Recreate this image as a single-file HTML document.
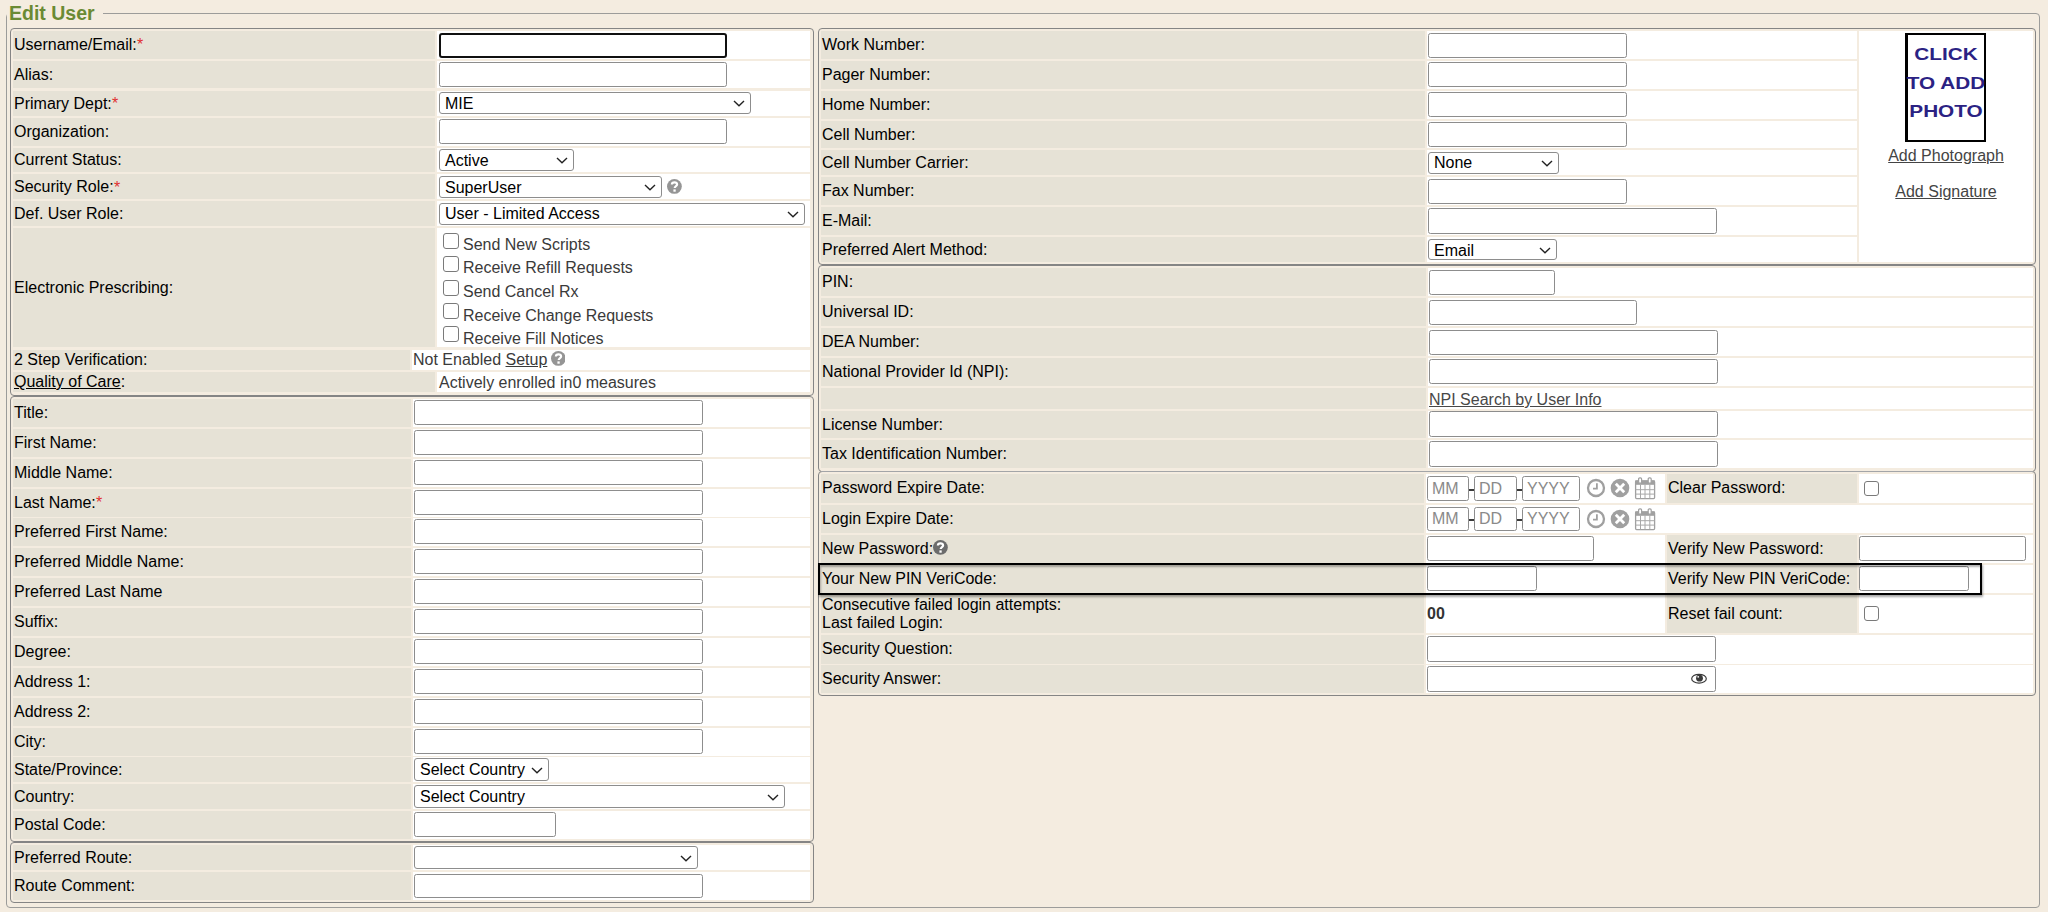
<!DOCTYPE html>
<html><head><meta charset="utf-8"><title>Edit User</title>
<style>
html,body{margin:0;padding:0;}
body{width:2048px;height:912px;overflow:hidden;position:relative;background:#f4ece0;font-family:'Liberation Sans', sans-serif;font-size:16px;color:#000;}
body>div,body>svg{position:absolute;}
</style></head><body>
<div style="left:6px;top:13px;width:2034px;height:895px;box-sizing:border-box;border:1px solid #9c9c9a;border-radius:4px;background:transparent;"></div>
<div style="left:7px;top:8px;width:96px;height:11px;background:#f4ece0;"></div>
<div style="left:9px;top:1px;height:24px;line-height:24px;font-size:19.5px;font-weight:bold;color:#6a8a34;white-space:nowrap">Edit User</div>
<div style="left:10px;top:28px;width:804px;height:368px;box-sizing:border-box;border:1px solid #858585;border-radius:4px;background:transparent;"></div>
<div style="left:13px;top:31px;width:422px;height:28px;background:#e6e2d6;"></div>
<div style="left:437px;top:31px;width:373px;height:28px;background:#ffffff;"></div>
<div style="left:13px;top:61px;width:422px;height:27px;background:#e6e2d6;"></div>
<div style="left:437px;top:61px;width:373px;height:27px;background:#ffffff;"></div>
<div style="left:13px;top:91px;width:422px;height:25px;background:#e6e2d6;"></div>
<div style="left:437px;top:91px;width:373px;height:25px;background:#ffffff;"></div>
<div style="left:13px;top:118px;width:422px;height:28px;background:#e6e2d6;"></div>
<div style="left:437px;top:118px;width:373px;height:28px;background:#ffffff;"></div>
<div style="left:13px;top:148px;width:422px;height:24px;background:#e6e2d6;"></div>
<div style="left:437px;top:148px;width:373px;height:24px;background:#ffffff;"></div>
<div style="left:13px;top:174px;width:422px;height:25px;background:#e6e2d6;"></div>
<div style="left:437px;top:174px;width:373px;height:25px;background:#ffffff;"></div>
<div style="left:13px;top:201px;width:422px;height:25px;background:#e6e2d6;"></div>
<div style="left:437px;top:201px;width:373px;height:25px;background:#ffffff;"></div>
<div style="left:13px;top:228px;width:422px;height:119px;background:#e6e2d6;"></div>
<div style="left:437px;top:228px;width:373px;height:119px;background:#ffffff;"></div>
<div style="left:13px;top:350px;width:397px;height:20px;background:#e6e2d6;"></div>
<div style="left:412px;top:350px;width:398px;height:20px;background:#ffffff;"></div>
<div style="left:13px;top:372px;width:422px;height:20px;background:#e6e2d6;"></div>
<div style="left:437px;top:372px;width:373px;height:20px;background:#ffffff;"></div>
<div style="left:14px;top:31px;height:28px;line-height:28px;font-size:16px;color:#000;font-weight:normal;white-space:nowrap;">Username/Email:</div>
<div style="left:14px;top:61px;height:27px;line-height:27px;font-size:16px;color:#000;font-weight:normal;white-space:nowrap;">Alias:</div>
<div style="left:14px;top:91px;height:25px;line-height:25px;font-size:16px;color:#000;font-weight:normal;white-space:nowrap;">Primary Dept:</div>
<div style="left:14px;top:118px;height:28px;line-height:28px;font-size:16px;color:#000;font-weight:normal;white-space:nowrap;">Organization:</div>
<div style="left:14px;top:148px;height:24px;line-height:24px;font-size:16px;color:#000;font-weight:normal;white-space:nowrap;">Current Status:</div>
<div style="left:14px;top:174px;height:25px;line-height:25px;font-size:16px;color:#000;font-weight:normal;white-space:nowrap;">Security Role:</div>
<div style="left:14px;top:201px;height:25px;line-height:25px;font-size:16px;color:#000;font-weight:normal;white-space:nowrap;">Def. User Role:</div>
<div style="left:14px;top:228px;height:119px;line-height:119px;font-size:16px;color:#000;font-weight:normal;white-space:nowrap;">Electronic Prescribing:</div>
<div style="left:14px;top:350px;height:20px;line-height:20px;font-size:16px;color:#000;font-weight:normal;white-space:nowrap;">2 Step Verification:</div>
<div style="left:14px;top:372px;height:20px;line-height:20px;font-size:16px;color:#000;font-weight:normal;white-space:nowrap;"><span style="text-decoration:underline">Quality of Care</span>:</div>
<div style="left:137px;top:37px;font-size:16px;line-height:16px;color:#e0312f">*</div>
<div style="left:112px;top:96px;font-size:16px;line-height:16px;color:#e0312f">*</div>
<div style="left:114px;top:180px;font-size:16px;line-height:16px;color:#e0312f">*</div>
<div style="left:439px;top:33px;width:288px;height:25px;box-sizing:border-box;border:2px solid #101010;border-radius:3px;background:#fff;"></div>
<div style="left:439px;top:62px;width:288px;height:25px;box-sizing:border-box;border:1px solid #8d8d8d;border-radius:2.5px;background:#fff;"></div>
<div style="left:439px;top:92px;width:312px;height:22px;box-sizing:border-box;border:1px solid #8d8d8d;border-radius:3px;background:#fff;"></div>
<div style="left:445px;top:93px;height:22px;line-height:22px;font-size:16px;color:#000;font-weight:normal;white-space:nowrap;">MIE</div>
<svg style="left:733px;top:99px" width="12" height="8" viewBox="0 0 12 8"><path d="M1 2 L6 6.7 L11 2" fill="none" stroke="#222" stroke-width="1.4"/></svg>
<div style="left:439px;top:119px;width:288px;height:25px;box-sizing:border-box;border:1px solid #8d8d8d;border-radius:2.5px;background:#fff;"></div>
<div style="left:439px;top:149px;width:135px;height:22px;box-sizing:border-box;border:1px solid #8d8d8d;border-radius:3px;background:#fff;"></div>
<div style="left:445px;top:150px;height:22px;line-height:22px;font-size:16px;color:#000;font-weight:normal;white-space:nowrap;">Active</div>
<svg style="left:556px;top:156px" width="12" height="8" viewBox="0 0 12 8"><path d="M1 2 L6 6.7 L11 2" fill="none" stroke="#222" stroke-width="1.4"/></svg>
<div style="left:439px;top:176px;width:223px;height:22px;box-sizing:border-box;border:1px solid #8d8d8d;border-radius:3px;background:#fff;"></div>
<div style="left:445px;top:177px;height:22px;line-height:22px;font-size:16px;color:#000;font-weight:normal;white-space:nowrap;">SuperUser</div>
<svg style="left:644px;top:183px" width="12" height="8" viewBox="0 0 12 8"><path d="M1 2 L6 6.7 L11 2" fill="none" stroke="#222" stroke-width="1.4"/></svg>
<svg style="left:667.3000000000001px;top:179.0px" width="14.8" height="14.8" viewBox="-7.4 -7.4 14.8 14.8"><circle cx="0" cy="0" r="7.4" fill="#959595"/><path d="M-2.5 -1.9 C-2.5 -3.6 -1.3 -4.0 0.2 -4.0 C1.7 -4.0 2.7 -3.2 2.7 -2.0 C2.7 -0.3 0.3 -0.4 0.3 1.7" fill="none" stroke="#fff" stroke-width="2.2"/><rect x="-1.0" y="3.0" width="2.3" height="2.3" fill="#fff"/></svg>
<div style="left:439px;top:203px;width:366px;height:22px;box-sizing:border-box;border:1px solid #8d8d8d;border-radius:3px;background:#fff;"></div>
<div style="left:445px;top:203px;height:22px;line-height:22px;font-size:16px;color:#000;font-weight:normal;white-space:nowrap;">User - Limited Access</div>
<svg style="left:787px;top:210px" width="12" height="8" viewBox="0 0 12 8"><path d="M1 2 L6 6.7 L11 2" fill="none" stroke="#222" stroke-width="1.4"/></svg>
<div style="left:443px;top:233px;width:16px;height:16px;box-sizing:border-box;border:1.3px solid #7a7a7a;border-radius:3px;background:#fff;"></div>
<div style="left:463px;top:231px;height:28px;line-height:28px;font-size:16px;color:#3a3a3a;font-weight:normal;white-space:nowrap;">Send New Scripts</div>
<div style="left:443px;top:256px;width:16px;height:16px;box-sizing:border-box;border:1.3px solid #7a7a7a;border-radius:3px;background:#fff;"></div>
<div style="left:463px;top:254px;height:28px;line-height:28px;font-size:16px;color:#3a3a3a;font-weight:normal;white-space:nowrap;">Receive Refill Requests</div>
<div style="left:443px;top:280px;width:16px;height:16px;box-sizing:border-box;border:1.3px solid #7a7a7a;border-radius:3px;background:#fff;"></div>
<div style="left:463px;top:278px;height:28px;line-height:28px;font-size:16px;color:#3a3a3a;font-weight:normal;white-space:nowrap;">Send Cancel Rx</div>
<div style="left:443px;top:303px;width:16px;height:16px;box-sizing:border-box;border:1.3px solid #7a7a7a;border-radius:3px;background:#fff;"></div>
<div style="left:463px;top:302px;height:28px;line-height:28px;font-size:16px;color:#3a3a3a;font-weight:normal;white-space:nowrap;">Receive Change Requests</div>
<div style="left:443px;top:326px;width:16px;height:16px;box-sizing:border-box;border:1.3px solid #7a7a7a;border-radius:3px;background:#fff;"></div>
<div style="left:463px;top:325px;height:28px;line-height:28px;font-size:16px;color:#3a3a3a;font-weight:normal;white-space:nowrap;">Receive Fill Notices</div>
<div style="left:413px;top:350px;height:20px;line-height:20px;font-size:16px;color:#3a3a3a;font-weight:normal;white-space:nowrap;">Not Enabled <span style="text-decoration:underline">Setup</span></div>
<svg style="left:550.7px;top:351.0px" width="14.8" height="14.8" viewBox="-7.4 -7.4 14.8 14.8"><circle cx="0" cy="0" r="7.4" fill="#959595"/><path d="M-2.5 -1.9 C-2.5 -3.6 -1.3 -4.0 0.2 -4.0 C1.7 -4.0 2.7 -3.2 2.7 -2.0 C2.7 -0.3 0.3 -0.4 0.3 1.7" fill="none" stroke="#fff" stroke-width="2.2"/><rect x="-1.0" y="3.0" width="2.3" height="2.3" fill="#fff"/></svg>
<div style="left:439px;top:373px;height:20px;line-height:20px;font-size:16px;color:#3a3a3a;font-weight:normal;white-space:nowrap;">Actively enrolled in0 measures</div>
<div style="left:10px;top:396px;width:804px;height:446px;box-sizing:border-box;border:1px solid #858585;border-radius:4px;background:transparent;"></div>
<div style="left:13px;top:399px;width:398px;height:28px;background:#e6e2d6;"></div>
<div style="left:413px;top:399px;width:397px;height:28px;background:#ffffff;"></div>
<div style="left:14px;top:399px;height:28px;line-height:28px;font-size:16px;color:#000;font-weight:normal;white-space:nowrap;">Title:</div>
<div style="left:414px;top:400px;width:289px;height:25px;box-sizing:border-box;border:1px solid #8d8d8d;border-radius:2.5px;background:#fff;"></div>
<div style="left:13px;top:429px;width:398px;height:28px;background:#e6e2d6;"></div>
<div style="left:413px;top:429px;width:397px;height:28px;background:#ffffff;"></div>
<div style="left:14px;top:429px;height:28px;line-height:28px;font-size:16px;color:#000;font-weight:normal;white-space:nowrap;">First Name:</div>
<div style="left:414px;top:430px;width:289px;height:25px;box-sizing:border-box;border:1px solid #8d8d8d;border-radius:2.5px;background:#fff;"></div>
<div style="left:13px;top:459px;width:398px;height:28px;background:#e6e2d6;"></div>
<div style="left:413px;top:459px;width:397px;height:28px;background:#ffffff;"></div>
<div style="left:14px;top:459px;height:28px;line-height:28px;font-size:16px;color:#000;font-weight:normal;white-space:nowrap;">Middle Name:</div>
<div style="left:414px;top:460px;width:289px;height:25px;box-sizing:border-box;border:1px solid #8d8d8d;border-radius:2.5px;background:#fff;"></div>
<div style="left:13px;top:489px;width:398px;height:28px;background:#e6e2d6;"></div>
<div style="left:413px;top:489px;width:397px;height:28px;background:#ffffff;"></div>
<div style="left:14px;top:489px;height:28px;line-height:28px;font-size:16px;color:#000;font-weight:normal;white-space:nowrap;">Last Name:</div>
<div style="left:414px;top:490px;width:289px;height:25px;box-sizing:border-box;border:1px solid #8d8d8d;border-radius:2.5px;background:#fff;"></div>
<div style="left:13px;top:518px;width:398px;height:28px;background:#e6e2d6;"></div>
<div style="left:413px;top:518px;width:397px;height:28px;background:#ffffff;"></div>
<div style="left:14px;top:518px;height:28px;line-height:28px;font-size:16px;color:#000;font-weight:normal;white-space:nowrap;">Preferred First Name:</div>
<div style="left:414px;top:519px;width:289px;height:25px;box-sizing:border-box;border:1px solid #8d8d8d;border-radius:2.5px;background:#fff;"></div>
<div style="left:13px;top:548px;width:398px;height:28px;background:#e6e2d6;"></div>
<div style="left:413px;top:548px;width:397px;height:28px;background:#ffffff;"></div>
<div style="left:14px;top:548px;height:28px;line-height:28px;font-size:16px;color:#000;font-weight:normal;white-space:nowrap;">Preferred Middle Name:</div>
<div style="left:414px;top:549px;width:289px;height:25px;box-sizing:border-box;border:1px solid #8d8d8d;border-radius:2.5px;background:#fff;"></div>
<div style="left:13px;top:578px;width:398px;height:28px;background:#e6e2d6;"></div>
<div style="left:413px;top:578px;width:397px;height:28px;background:#ffffff;"></div>
<div style="left:14px;top:578px;height:28px;line-height:28px;font-size:16px;color:#000;font-weight:normal;white-space:nowrap;">Preferred Last Name</div>
<div style="left:414px;top:579px;width:289px;height:25px;box-sizing:border-box;border:1px solid #8d8d8d;border-radius:2.5px;background:#fff;"></div>
<div style="left:13px;top:608px;width:398px;height:28px;background:#e6e2d6;"></div>
<div style="left:413px;top:608px;width:397px;height:28px;background:#ffffff;"></div>
<div style="left:14px;top:608px;height:28px;line-height:28px;font-size:16px;color:#000;font-weight:normal;white-space:nowrap;">Suffix:</div>
<div style="left:414px;top:609px;width:289px;height:25px;box-sizing:border-box;border:1px solid #8d8d8d;border-radius:2.5px;background:#fff;"></div>
<div style="left:13px;top:638px;width:398px;height:28px;background:#e6e2d6;"></div>
<div style="left:413px;top:638px;width:397px;height:28px;background:#ffffff;"></div>
<div style="left:14px;top:638px;height:28px;line-height:28px;font-size:16px;color:#000;font-weight:normal;white-space:nowrap;">Degree:</div>
<div style="left:414px;top:639px;width:289px;height:25px;box-sizing:border-box;border:1px solid #8d8d8d;border-radius:2.5px;background:#fff;"></div>
<div style="left:13px;top:668px;width:398px;height:28px;background:#e6e2d6;"></div>
<div style="left:413px;top:668px;width:397px;height:28px;background:#ffffff;"></div>
<div style="left:14px;top:668px;height:28px;line-height:28px;font-size:16px;color:#000;font-weight:normal;white-space:nowrap;">Address 1:</div>
<div style="left:414px;top:669px;width:289px;height:25px;box-sizing:border-box;border:1px solid #8d8d8d;border-radius:2.5px;background:#fff;"></div>
<div style="left:13px;top:698px;width:398px;height:28px;background:#e6e2d6;"></div>
<div style="left:413px;top:698px;width:397px;height:28px;background:#ffffff;"></div>
<div style="left:14px;top:698px;height:28px;line-height:28px;font-size:16px;color:#000;font-weight:normal;white-space:nowrap;">Address 2:</div>
<div style="left:414px;top:699px;width:289px;height:25px;box-sizing:border-box;border:1px solid #8d8d8d;border-radius:2.5px;background:#fff;"></div>
<div style="left:13px;top:728px;width:398px;height:28px;background:#e6e2d6;"></div>
<div style="left:413px;top:728px;width:397px;height:28px;background:#ffffff;"></div>
<div style="left:14px;top:728px;height:28px;line-height:28px;font-size:16px;color:#000;font-weight:normal;white-space:nowrap;">City:</div>
<div style="left:414px;top:729px;width:289px;height:25px;box-sizing:border-box;border:1px solid #8d8d8d;border-radius:2.5px;background:#fff;"></div>
<div style="left:13px;top:757px;width:398px;height:25px;background:#e6e2d6;"></div>
<div style="left:413px;top:757px;width:397px;height:25px;background:#ffffff;"></div>
<div style="left:14px;top:757px;height:25px;line-height:25px;font-size:16px;color:#000;font-weight:normal;white-space:nowrap;">State/Province:</div>
<div style="left:13px;top:784px;width:398px;height:25px;background:#e6e2d6;"></div>
<div style="left:413px;top:784px;width:397px;height:25px;background:#ffffff;"></div>
<div style="left:14px;top:784px;height:25px;line-height:25px;font-size:16px;color:#000;font-weight:normal;white-space:nowrap;">Country:</div>
<div style="left:13px;top:811px;width:398px;height:28px;background:#e6e2d6;"></div>
<div style="left:413px;top:811px;width:397px;height:28px;background:#ffffff;"></div>
<div style="left:14px;top:811px;height:28px;line-height:28px;font-size:16px;color:#000;font-weight:normal;white-space:nowrap;">Postal Code:</div>
<div style="left:96px;top:495px;font-size:16px;line-height:16px;color:#e0312f">*</div>
<div style="left:414px;top:758px;width:135px;height:23px;box-sizing:border-box;border:1px solid #8d8d8d;border-radius:3px;background:#fff;"></div>
<div style="left:420px;top:758px;height:23px;line-height:23px;font-size:16px;color:#000;font-weight:normal;white-space:nowrap;">Select Country</div>
<svg style="left:531px;top:766px" width="12" height="8" viewBox="0 0 12 8"><path d="M1 2 L6 6.7 L11 2" fill="none" stroke="#222" stroke-width="1.4"/></svg>
<div style="left:414px;top:785px;width:371px;height:23px;box-sizing:border-box;border:1px solid #8d8d8d;border-radius:3px;background:#fff;"></div>
<div style="left:420px;top:785px;height:23px;line-height:23px;font-size:16px;color:#000;font-weight:normal;white-space:nowrap;">Select Country</div>
<svg style="left:767px;top:793px" width="12" height="8" viewBox="0 0 12 8"><path d="M1 2 L6 6.7 L11 2" fill="none" stroke="#222" stroke-width="1.4"/></svg>
<div style="left:414px;top:812px;width:142px;height:25px;box-sizing:border-box;border:1px solid #8d8d8d;border-radius:2.5px;background:#fff;"></div>
<div style="left:10px;top:842px;width:804px;height:61px;box-sizing:border-box;border:1px solid #858585;border-radius:4px;background:transparent;"></div>
<div style="left:13px;top:845px;width:398px;height:25px;background:#e6e2d6;"></div>
<div style="left:413px;top:845px;width:397px;height:25px;background:#ffffff;"></div>
<div style="left:14px;top:845px;height:25px;line-height:25px;font-size:16px;color:#000;font-weight:normal;white-space:nowrap;">Preferred Route:</div>
<div style="left:13px;top:872px;width:398px;height:28px;background:#e6e2d6;"></div>
<div style="left:413px;top:872px;width:397px;height:28px;background:#ffffff;"></div>
<div style="left:14px;top:872px;height:28px;line-height:28px;font-size:16px;color:#000;font-weight:normal;white-space:nowrap;">Route Comment:</div>
<div style="left:414px;top:846px;width:284px;height:23px;box-sizing:border-box;border:1px solid #8d8d8d;border-radius:3px;background:#fff;"></div>
<svg style="left:680px;top:854px" width="12" height="8" viewBox="0 0 12 8"><path d="M1 2 L6 6.7 L11 2" fill="none" stroke="#222" stroke-width="1.4"/></svg>
<div style="left:414px;top:874px;width:289px;height:24px;box-sizing:border-box;border:1px solid #8d8d8d;border-radius:2.5px;background:#fff;"></div>
<div style="left:818px;top:28px;width:1218px;height:237px;box-sizing:border-box;border:1px solid #858585;border-radius:4px;background:transparent;"></div>
<div style="left:821px;top:31px;width:604px;height:28px;background:#e6e2d6;"></div>
<div style="left:1427px;top:31px;width:430px;height:28px;background:#ffffff;"></div>
<div style="left:822px;top:31px;height:28px;line-height:28px;font-size:16px;color:#000;font-weight:normal;white-space:nowrap;">Work Number:</div>
<div style="left:821px;top:61px;width:604px;height:28px;background:#e6e2d6;"></div>
<div style="left:1427px;top:61px;width:430px;height:28px;background:#ffffff;"></div>
<div style="left:822px;top:61px;height:28px;line-height:28px;font-size:16px;color:#000;font-weight:normal;white-space:nowrap;">Pager Number:</div>
<div style="left:821px;top:91px;width:604px;height:28px;background:#e6e2d6;"></div>
<div style="left:1427px;top:91px;width:430px;height:28px;background:#ffffff;"></div>
<div style="left:822px;top:91px;height:28px;line-height:28px;font-size:16px;color:#000;font-weight:normal;white-space:nowrap;">Home Number:</div>
<div style="left:821px;top:121px;width:604px;height:27px;background:#e6e2d6;"></div>
<div style="left:1427px;top:121px;width:430px;height:27px;background:#ffffff;"></div>
<div style="left:822px;top:121px;height:27px;line-height:27px;font-size:16px;color:#000;font-weight:normal;white-space:nowrap;">Cell Number:</div>
<div style="left:821px;top:150px;width:604px;height:25px;background:#e6e2d6;"></div>
<div style="left:1427px;top:150px;width:430px;height:25px;background:#ffffff;"></div>
<div style="left:822px;top:150px;height:25px;line-height:25px;font-size:16px;color:#000;font-weight:normal;white-space:nowrap;">Cell Number Carrier:</div>
<div style="left:821px;top:177px;width:604px;height:28px;background:#e6e2d6;"></div>
<div style="left:1427px;top:177px;width:430px;height:28px;background:#ffffff;"></div>
<div style="left:822px;top:177px;height:28px;line-height:28px;font-size:16px;color:#000;font-weight:normal;white-space:nowrap;">Fax Number:</div>
<div style="left:821px;top:207px;width:604px;height:28px;background:#e6e2d6;"></div>
<div style="left:1427px;top:207px;width:430px;height:28px;background:#ffffff;"></div>
<div style="left:822px;top:207px;height:28px;line-height:28px;font-size:16px;color:#000;font-weight:normal;white-space:nowrap;">E-Mail:</div>
<div style="left:821px;top:237px;width:604px;height:25px;background:#e6e2d6;"></div>
<div style="left:1427px;top:237px;width:430px;height:25px;background:#ffffff;"></div>
<div style="left:822px;top:237px;height:25px;line-height:25px;font-size:16px;color:#000;font-weight:normal;white-space:nowrap;">Preferred Alert Method:</div>
<div style="left:1859px;top:31px;width:174px;height:231px;background:#ffffff;"></div>
<div style="left:1428px;top:33px;width:199px;height:25px;box-sizing:border-box;border:1px solid #8d8d8d;border-radius:2.5px;background:#fff;"></div>
<div style="left:1428px;top:62px;width:199px;height:25px;box-sizing:border-box;border:1px solid #8d8d8d;border-radius:2.5px;background:#fff;"></div>
<div style="left:1428px;top:92px;width:199px;height:25px;box-sizing:border-box;border:1px solid #8d8d8d;border-radius:2.5px;background:#fff;"></div>
<div style="left:1428px;top:122px;width:199px;height:25px;box-sizing:border-box;border:1px solid #8d8d8d;border-radius:2.5px;background:#fff;"></div>
<div style="left:1428px;top:179px;width:199px;height:25px;box-sizing:border-box;border:1px solid #8d8d8d;border-radius:2.5px;background:#fff;"></div>
<div style="left:1428px;top:152px;width:131px;height:22px;box-sizing:border-box;border:1px solid #8d8d8d;border-radius:3px;background:#fff;"></div>
<div style="left:1434px;top:152px;height:22px;line-height:22px;font-size:16px;color:#000;font-weight:normal;white-space:nowrap;">None</div>
<svg style="left:1541px;top:159px" width="12" height="8" viewBox="0 0 12 8"><path d="M1 2 L6 6.7 L11 2" fill="none" stroke="#222" stroke-width="1.4"/></svg>
<div style="left:1428px;top:208px;width:289px;height:26px;box-sizing:border-box;border:1px solid #8d8d8d;border-radius:2.5px;background:#fff;"></div>
<div style="left:1428px;top:239px;width:129px;height:21px;box-sizing:border-box;border:1px solid #8d8d8d;border-radius:3px;background:#fff;"></div>
<div style="left:1434px;top:240px;height:21px;line-height:21px;font-size:16px;color:#000;font-weight:normal;white-space:nowrap;">Email</div>
<svg style="left:1539px;top:246px" width="12" height="8" viewBox="0 0 12 8"><path d="M1 2 L6 6.7 L11 2" fill="none" stroke="#222" stroke-width="1.4"/></svg>
<div style="left:1905px;top:33px;width:81px;height:109px;box-sizing:border-box;border:2px solid #000;border-radius:0px;background:#fff;border-left-width:3px"></div>
<div style="left:1886px;width:120px;text-align:center;top:43px;height:24px;line-height:24px;font-size:17px;font-weight:bold;color:#2b2283;white-space:nowrap;transform:scaleX(1.22);transform-origin:60px 0">CLICK</div>
<div style="left:1886px;width:120px;text-align:center;top:72px;height:24px;line-height:24px;font-size:17px;font-weight:bold;color:#2b2283;white-space:nowrap;transform:scaleX(1.22);transform-origin:60px 0">TO ADD</div>
<div style="left:1886px;width:120px;text-align:center;top:100px;height:24px;line-height:24px;font-size:17px;font-weight:bold;color:#2b2283;white-space:nowrap;transform:scaleX(1.22);transform-origin:60px 0">PHOTO</div>
<div style="left:1859px;width:174px;text-align:center;top:144px;height:24px;line-height:24px;font-size:16px;color:#444;text-decoration:underline">Add Photograph</div>
<div style="left:1859px;width:174px;text-align:center;top:180px;height:24px;line-height:24px;font-size:16px;color:#444;text-decoration:underline">Add Signature</div>
<div style="left:880.5px;top:41.5px;width:3.5px;height:3.5px;border-radius:50%;background:#fff"></div>
<div style="left:818px;top:265px;width:1218px;height:207px;box-sizing:border-box;border:1px solid #858585;border-radius:4px;background:transparent;"></div>
<div style="left:821px;top:268px;width:605px;height:28px;background:#e6e2d6;"></div>
<div style="left:1428px;top:268px;width:605px;height:28px;background:#ffffff;"></div>
<div style="left:822px;top:268px;height:28px;line-height:28px;font-size:16px;color:#000;font-weight:normal;white-space:nowrap;">PIN:</div>
<div style="left:821px;top:298px;width:605px;height:28px;background:#e6e2d6;"></div>
<div style="left:1428px;top:298px;width:605px;height:28px;background:#ffffff;"></div>
<div style="left:822px;top:298px;height:28px;line-height:28px;font-size:16px;color:#000;font-weight:normal;white-space:nowrap;">Universal ID:</div>
<div style="left:821px;top:328px;width:605px;height:28px;background:#e6e2d6;"></div>
<div style="left:1428px;top:328px;width:605px;height:28px;background:#ffffff;"></div>
<div style="left:822px;top:328px;height:28px;line-height:28px;font-size:16px;color:#000;font-weight:normal;white-space:nowrap;">DEA Number:</div>
<div style="left:821px;top:358px;width:605px;height:28px;background:#e6e2d6;"></div>
<div style="left:1428px;top:358px;width:605px;height:28px;background:#ffffff;"></div>
<div style="left:822px;top:358px;height:28px;line-height:28px;font-size:16px;color:#000;font-weight:normal;white-space:nowrap;">National Provider Id (NPI):</div>
<div style="left:821px;top:388px;width:605px;height:21px;background:#e6e2d6;"></div>
<div style="left:1428px;top:388px;width:605px;height:21px;background:#ffffff;"></div>
<div style="left:821px;top:411px;width:605px;height:27px;background:#e6e2d6;"></div>
<div style="left:1428px;top:411px;width:605px;height:27px;background:#ffffff;"></div>
<div style="left:822px;top:411px;height:27px;line-height:27px;font-size:16px;color:#000;font-weight:normal;white-space:nowrap;">License Number:</div>
<div style="left:821px;top:440px;width:605px;height:28px;background:#e6e2d6;"></div>
<div style="left:1428px;top:440px;width:605px;height:28px;background:#ffffff;"></div>
<div style="left:822px;top:440px;height:28px;line-height:28px;font-size:16px;color:#000;font-weight:normal;white-space:nowrap;">Tax Identification Number:</div>
<div style="left:1429px;top:270px;width:126px;height:25px;box-sizing:border-box;border:1px solid #8d8d8d;border-radius:2.5px;background:#fff;"></div>
<div style="left:1429px;top:300px;width:208px;height:25px;box-sizing:border-box;border:1px solid #8d8d8d;border-radius:2.5px;background:#fff;"></div>
<div style="left:1429px;top:330px;width:289px;height:25px;box-sizing:border-box;border:1px solid #8d8d8d;border-radius:2.5px;background:#fff;"></div>
<div style="left:1429px;top:359px;width:289px;height:25px;box-sizing:border-box;border:1px solid #8d8d8d;border-radius:2.5px;background:#fff;"></div>
<div style="left:1429px;top:389px;height:21px;line-height:21px;font-size:16px;color:#484848;font-weight:normal;white-space:nowrap;text-decoration:underline">NPI Search by User Info</div>
<div style="left:1429px;top:411px;width:289px;height:26px;box-sizing:border-box;border:1px solid #8d8d8d;border-radius:2.5px;background:#fff;"></div>
<div style="left:1429px;top:441px;width:289px;height:26px;box-sizing:border-box;border:1px solid #8d8d8d;border-radius:2.5px;background:#fff;"></div>
<div style="left:818px;top:471px;width:1218px;height:225px;box-sizing:border-box;border:1px solid #858585;border-radius:4px;background:transparent;"></div>
<div style="left:821px;top:470px;width:1212px;height:2px;background:#f4ece0;"></div>
<div style="left:821px;top:471px;width:1212px;height:1px;background:#a3a5a8;"></div>
<div style="left:821px;top:474px;width:603px;height:29px;background:#e6e2d6;"></div>
<div style="left:1426px;top:474px;width:239px;height:29px;background:#ffffff;"></div>
<div style="left:1667px;top:474px;width:190px;height:29px;background:#e6e2d6;"></div>
<div style="left:1859px;top:474px;width:174px;height:29px;background:#ffffff;"></div>
<div style="left:822px;top:473px;height:29px;line-height:29px;font-size:16px;color:#000;font-weight:normal;white-space:nowrap;">Password Expire Date:</div>
<div style="left:821px;top:505px;width:603px;height:28px;background:#e6e2d6;"></div>
<div style="left:1426px;top:505px;width:607px;height:28px;background:#ffffff;"></div>
<div style="left:822px;top:505px;height:28px;line-height:28px;font-size:16px;color:#000;font-weight:normal;white-space:nowrap;">Login Expire Date:</div>
<div style="left:821px;top:535px;width:603px;height:28px;background:#e6e2d6;"></div>
<div style="left:1426px;top:535px;width:239px;height:28px;background:#ffffff;"></div>
<div style="left:1667px;top:535px;width:190px;height:28px;background:#e6e2d6;"></div>
<div style="left:1859px;top:535px;width:174px;height:28px;background:#ffffff;"></div>
<div style="left:822px;top:535px;height:28px;line-height:28px;font-size:16px;color:#000;font-weight:normal;white-space:nowrap;">New Password:</div>
<div style="left:821px;top:565px;width:603px;height:28px;background:#e6e2d6;"></div>
<div style="left:1426px;top:565px;width:239px;height:28px;background:#ffffff;"></div>
<div style="left:1667px;top:565px;width:190px;height:28px;background:#e6e2d6;"></div>
<div style="left:1859px;top:565px;width:174px;height:28px;background:#ffffff;"></div>
<div style="left:822px;top:565px;height:28px;line-height:28px;font-size:16px;color:#000;font-weight:normal;white-space:nowrap;">Your New PIN VeriCode:</div>
<div style="left:821px;top:595px;width:603px;height:38px;background:#e6e2d6;"></div>
<div style="left:1426px;top:595px;width:239px;height:38px;background:#ffffff;"></div>
<div style="left:1667px;top:595px;width:190px;height:38px;background:#e6e2d6;"></div>
<div style="left:1859px;top:595px;width:174px;height:38px;background:#ffffff;"></div>
<div style="left:821px;top:635px;width:603px;height:29px;background:#e6e2d6;"></div>
<div style="left:1426px;top:635px;width:607px;height:29px;background:#ffffff;"></div>
<div style="left:822px;top:634px;height:29px;line-height:29px;font-size:16px;color:#000;font-weight:normal;white-space:nowrap;">Security Question:</div>
<div style="left:821px;top:665px;width:603px;height:28px;background:#e6e2d6;"></div>
<div style="left:1426px;top:665px;width:607px;height:28px;background:#ffffff;"></div>
<div style="left:822px;top:665px;height:28px;line-height:28px;font-size:16px;color:#000;font-weight:normal;white-space:nowrap;">Security Answer:</div>
<div style="left:822px;top:591px;height:28px;line-height:28px;font-size:16px;color:#000;font-weight:normal;white-space:nowrap;">Consecutive failed login attempts:</div>
<div style="left:822px;top:609px;height:28px;line-height:28px;font-size:16px;color:#000;font-weight:normal;white-space:nowrap;">Last failed Login:</div>
<svg style="left:933.1px;top:540.1px" width="14.8" height="14.8" viewBox="-7.4 -7.4 14.8 14.8"><circle cx="0" cy="0" r="7.4" fill="#6c6c6c"/><path d="M-2.5 -1.9 C-2.5 -3.6 -1.3 -4.0 0.2 -4.0 C1.7 -4.0 2.7 -3.2 2.7 -2.0 C2.7 -0.3 0.3 -0.4 0.3 1.7" fill="none" stroke="#fff" stroke-width="2.2"/><rect x="-1.0" y="3.0" width="2.3" height="2.3" fill="#fff"/></svg>
<div style="left:1668px;top:473px;height:29px;line-height:29px;font-size:16px;color:#000;font-weight:normal;white-space:nowrap;">Clear Password:</div>
<div style="left:1668px;top:535px;height:28px;line-height:28px;font-size:16px;color:#000;font-weight:normal;white-space:nowrap;">Verify New Password:</div>
<div style="left:1668px;top:565px;height:28px;line-height:28px;font-size:16px;color:#000;font-weight:normal;white-space:nowrap;">Verify New PIN VeriCode:</div>
<div style="left:1668px;top:595px;height:38px;line-height:38px;font-size:16px;color:#000;font-weight:normal;white-space:nowrap;">Reset fail count:</div>
<div style="left:1864px;top:481px;width:15px;height:15px;box-sizing:border-box;border:1.3px solid #7a7a7a;border-radius:3px;background:#fff;"></div>
<div style="left:1864px;top:606px;width:15px;height:15px;box-sizing:border-box;border:1.3px solid #7a7a7a;border-radius:3px;background:#fff;"></div>
<div style="left:1427px;top:476px;width:42px;height:25px;box-sizing:border-box;border:1px solid #8d8d8d;border-radius:2.5px;background:#fff;"></div>
<div style="left:1432px;top:476px;height:25px;line-height:25px;font-size:16px;color:#8a8a8a;font-weight:normal;white-space:nowrap;">MM</div>
<div style="left:1474px;top:476px;width:43px;height:25px;box-sizing:border-box;border:1px solid #8d8d8d;border-radius:2.5px;background:#fff;"></div>
<div style="left:1479px;top:476px;height:25px;line-height:25px;font-size:16px;color:#8a8a8a;font-weight:normal;white-space:nowrap;">DD</div>
<div style="left:1522px;top:476px;width:58px;height:25px;box-sizing:border-box;border:1px solid #8d8d8d;border-radius:2.5px;background:#fff;"></div>
<div style="left:1527px;top:476px;height:25px;line-height:25px;font-size:16px;color:#8a8a8a;font-weight:normal;white-space:nowrap;">YYYY</div>
<div style="left:1469px;top:489px;width:5px;height:2px;background:#3a3a3a;"></div>
<div style="left:1517px;top:489px;width:5px;height:2px;background:#3a3a3a;"></div>
<svg style="left:1586px;top:478.0px" width="20" height="20" viewBox="0 0 20 20"><circle cx="10" cy="10" r="8" fill="none" stroke="#a0a0a0" stroke-width="2.3"/><path d="M10.9 5.2 V10.6 H7" fill="none" stroke="#a0a0a0" stroke-width="1.8"/></svg>
<svg style="left:1610.4px;top:478.0px" width="20" height="20" viewBox="0 0 20 20"><circle cx="10" cy="10" r="9.3" fill="#a0a0a0"/><path d="M5.8 5.8 L14.2 14.2 M14.2 5.8 L5.8 14.2" stroke="#fff" stroke-width="2.8"/></svg>
<svg style="left:1634px;top:477.0px" width="22" height="23" viewBox="0 0 22 23"><rect x="1.6" y="4" width="19" height="17.6" rx="1" fill="#fff" stroke="#a0a0a0" stroke-width="1.3"/><rect x="1" y="3.5" width="20" height="4.3" fill="#a0a0a0"/><path d="M1.5 12.7 H20.5 M1.5 17.1 H20.5 M6.5 7.5 V21.5 M11 7.5 V21.5 M15.8 7.5 V21.5" stroke="#a8a8a8" stroke-width="1"/><rect x="4.6" y="0.8" width="3" height="5.4" rx="1.2" fill="#fff" stroke="#a0a0a0" stroke-width="1.2"/><rect x="14.2" y="0.8" width="3" height="5.4" rx="1.2" fill="#fff" stroke="#a0a0a0" stroke-width="1.2"/></svg>
<div style="left:1427px;top:507px;width:42px;height:24px;box-sizing:border-box;border:1px solid #8d8d8d;border-radius:2.5px;background:#fff;"></div>
<div style="left:1432px;top:507px;height:24px;line-height:24px;font-size:16px;color:#8a8a8a;font-weight:normal;white-space:nowrap;">MM</div>
<div style="left:1474px;top:507px;width:43px;height:24px;box-sizing:border-box;border:1px solid #8d8d8d;border-radius:2.5px;background:#fff;"></div>
<div style="left:1479px;top:507px;height:24px;line-height:24px;font-size:16px;color:#8a8a8a;font-weight:normal;white-space:nowrap;">DD</div>
<div style="left:1522px;top:507px;width:58px;height:24px;box-sizing:border-box;border:1px solid #8d8d8d;border-radius:2.5px;background:#fff;"></div>
<div style="left:1527px;top:507px;height:24px;line-height:24px;font-size:16px;color:#8a8a8a;font-weight:normal;white-space:nowrap;">YYYY</div>
<div style="left:1469px;top:519px;width:5px;height:2px;background:#3a3a3a;"></div>
<div style="left:1517px;top:519px;width:5px;height:2px;background:#3a3a3a;"></div>
<svg style="left:1586px;top:508.5px" width="20" height="20" viewBox="0 0 20 20"><circle cx="10" cy="10" r="8" fill="none" stroke="#a0a0a0" stroke-width="2.3"/><path d="M10.9 5.2 V10.6 H7" fill="none" stroke="#a0a0a0" stroke-width="1.8"/></svg>
<svg style="left:1610.4px;top:508.5px" width="20" height="20" viewBox="0 0 20 20"><circle cx="10" cy="10" r="9.3" fill="#a0a0a0"/><path d="M5.8 5.8 L14.2 14.2 M14.2 5.8 L5.8 14.2" stroke="#fff" stroke-width="2.8"/></svg>
<svg style="left:1634px;top:507.5px" width="22" height="23" viewBox="0 0 22 23"><rect x="1.6" y="4" width="19" height="17.6" rx="1" fill="#fff" stroke="#a0a0a0" stroke-width="1.3"/><rect x="1" y="3.5" width="20" height="4.3" fill="#a0a0a0"/><path d="M1.5 12.7 H20.5 M1.5 17.1 H20.5 M6.5 7.5 V21.5 M11 7.5 V21.5 M15.8 7.5 V21.5" stroke="#a8a8a8" stroke-width="1"/><rect x="4.6" y="0.8" width="3" height="5.4" rx="1.2" fill="#fff" stroke="#a0a0a0" stroke-width="1.2"/><rect x="14.2" y="0.8" width="3" height="5.4" rx="1.2" fill="#fff" stroke="#a0a0a0" stroke-width="1.2"/></svg>
<div style="left:1427px;top:536px;width:167px;height:25px;box-sizing:border-box;border:1px solid #8d8d8d;border-radius:2.5px;background:#fff;"></div>
<div style="left:1859px;top:536px;width:167px;height:25px;box-sizing:border-box;border:1px solid #8d8d8d;border-radius:2.5px;background:#fff;"></div>
<div style="left:1427px;top:566px;width:110px;height:25px;box-sizing:border-box;border:1px solid #8d8d8d;border-radius:2.5px;background:#fff;"></div>
<div style="left:1859px;top:566px;width:110px;height:25px;box-sizing:border-box;border:1px solid #8d8d8d;border-radius:2.5px;background:#fff;"></div>
<div style="left:1427px;top:595px;height:38px;line-height:38px;font-size:16px;color:#333;font-weight:bold;white-space:nowrap;">00</div>
<div style="left:1427px;top:636px;width:289px;height:26px;box-sizing:border-box;border:1px solid #8d8d8d;border-radius:2.5px;background:#fff;"></div>
<div style="left:1427px;top:666px;width:289px;height:26px;box-sizing:border-box;border:1px solid #8d8d8d;border-radius:2.5px;background:#fff;"></div>
<svg style="left:1690px;top:672px" width="18" height="13" viewBox="0 0 18 13"><ellipse cx="9" cy="6.7" rx="7.3" ry="4.4" fill="#fff" stroke="#3a3a3a" stroke-width="1.2"/><circle cx="9.5" cy="6.2" r="3.4" fill="#3a3a3a"/><circle cx="8.2" cy="4.8" r="0.9" fill="#fff"/></svg>
<div style="left:818px;top:563px;width:1164px;height:32px;box-sizing:border-box;border:2.6px solid #000;border-radius:0px;background:transparent;box-shadow:1px 2px 2px rgba(0,0,0,0.35), inset 1px 2px 2px rgba(0,0,0,0.3)"></div>
</body></html>
